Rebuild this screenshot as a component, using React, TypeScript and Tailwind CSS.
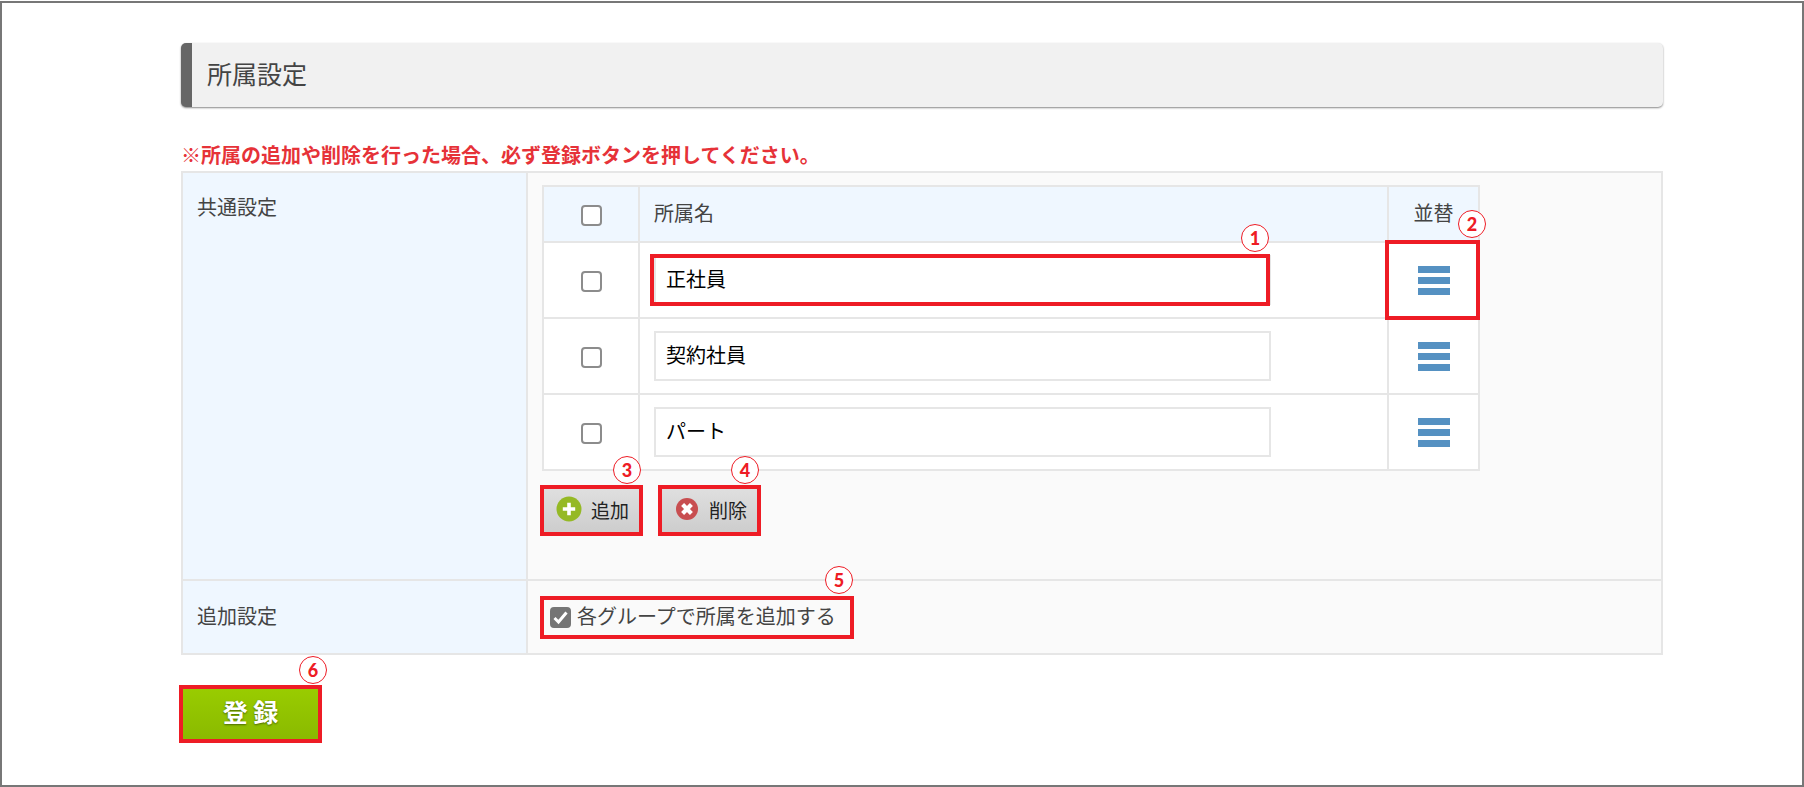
import type { ReactNode } from "react";

const frame = "border-4 border-[#ee1c25]";

function Marker({ n, className }: { n: number; className: string }) {
  return (
    <span
      className={`absolute z-10 flex size-7 items-center justify-center rounded-full border border-[#ee1c25] bg-white font-[Lato,sans-serif] text-lg leading-none font-black text-[#ee1c25] ${className}`}
    >
      {n}
    </span>
  );
}

function Check({ label, checked = false }: { label?: string; checked?: boolean }) {
  return (
    <span className="relative inline-flex size-[21px] shrink-0 align-middle">
      <input
        type="checkbox"
        aria-label={label}
        defaultChecked={checked}
        className="peer size-full appearance-none rounded-[4px] border-2 border-[#8c8c8c] bg-white checked:border-[#757575] checked:bg-[#757575]"
      />
      <svg
        viewBox="0 0 21 21"
        className="pointer-events-none absolute inset-0 hidden size-full peer-checked:block"
        aria-hidden="true"
      >
        <path d="M4.5 11 L8.5 15 L16.5 5.5" fill="none" stroke="#fff" strokeWidth="3" />
      </svg>
    </span>
  );
}

function Bars() {
  return (
    <svg viewBox="0 0 32 29" className="h-[29px] w-8" aria-hidden="true">
      <path d="M0 0h32v7H0zM0 11h32v7H0zM0 22h32v7H0z" fill="#5591c2" />
    </svg>
  );
}

function AddIcon() {
  return (
    <svg viewBox="0 0 26 26" className="size-[26px]" aria-hidden="true">
      <circle cx="13" cy="13" r="12.5" fill="#95b925" />
      <path d="M13 6.8v12.4M6.8 13h12.4" stroke="#fff" strokeWidth="3.6" />
    </svg>
  );
}

function RemoveIcon() {
  return (
    <svg viewBox="0 0 26 26" className="size-[26px]" aria-hidden="true">
      <circle cx="13" cy="13" r="11" fill="#c84e50" />
      <path d="M8.6 8.6l8.8 8.8M17.4 8.6l-8.8 8.8" stroke="#fff" strokeWidth="4.2" />
    </svg>
  );
}

function ToolButton({ icon, children, n }: { icon: ReactNode; children: ReactNode; n: number }) {
  return (
    <div className="relative">
      <Marker n={n} className="-top-[29px] right-[2px]" />
      <button
        type="button"
        className={`flex h-[51px] w-[103px] items-center gap-[9px] bg-linear-to-b from-[#dfdfdf] to-[#cdcdcd] pb-[3px] pl-3 text-[19px] leading-none whitespace-nowrap text-[#222] ${frame}`}
      >
        {icon}
        {children}
      </button>
    </div>
  );
}

const names = ["正社員", "契約社員", "パート"];
const cell = "border-2 border-[#e6e6e6]";

export default function App() {
  return (
    <div className="flex min-h-screen bg-white pt-px font-['Noto_Sans_CJK_JP',sans-serif] text-xl leading-none text-[#444]">
      <main className="flex-1 border-2 border-[#777] pt-10 pr-[139px] pb-10 pl-[179px]">
        <h1 className="flex h-16 items-center rounded-[5px] border-l-[11px] border-[#666] bg-[#f1f1f1] pb-[3px] pl-[15px] text-[25px] shadow-[0_1px_2px_#888]">
          所属設定
        </h1>
        <p className="mt-9 mb-1 leading-6 font-bold text-[#e63238]">
          ※所属の追加や削除を行った場合、必ず登録ボタンを押してください。
        </p>

        <table className="w-full border-collapse">
          <tbody>
            <tr>
              <th scope="row" className={`w-[345px] bg-[#eff7ff] px-[14px] pt-6 text-left align-top font-normal ${cell}`}>
                共通設定
              </th>
              <td className={`bg-[#fafafa] pt-3 pr-[181px] pb-[43px] pl-[14px] ${cell}`}>
                <table className="w-full table-fixed border-collapse bg-white">
                  <thead>
                    <tr className="h-14 bg-[#eff7ff]">
                      <th className={`w-[96px] text-center ${cell}`}>
                        <Check label="すべて選択" />
                      </th>
                      <th className={`pb-[3px] pl-[14px] text-left font-normal ${cell}`}>所属名</th>
                      <th className={`w-[91px] pb-[3px] text-center font-normal ${cell}`}>並替</th>
                    </tr>
                  </thead>
                  <tbody>
                    {names.map((name, i) => (
                      <tr key={name} className="h-[76px]">
                        <td className={`text-center ${cell}`}>
                          <Check label={`${name}を選択`} />
                        </td>
                        <td className={`pr-[116px] pl-[14px] ${cell}`}>
                          <div className="relative">
                            <input
                              type="text"
                              aria-label="所属名"
                              defaultValue={name}
                              className="block h-[50px] w-full border-2 border-[#e6e6e6] bg-white px-[10px] pb-1 text-black"
                            />
                            {i === 0 && (
                              <>
                                <span className={`pointer-events-none absolute -inset-y-px right-px -left-1 ${frame}`} />
                                <Marker n={1} className="-top-[31px] right-[2px]" />
                              </>
                            )}
                          </div>
                        </td>
                        <td className={`relative text-center ${cell}`}>
                          <button type="button" aria-label={`${name}を並べ替え`} className="block w-full">
                            <span className="flex justify-center">
                              <Bars />
                            </span>
                          </button>
                          {i === 0 && (
                            <>
                              <span className={`pointer-events-none absolute -inset-y-[3px] -right-[2px] -left-[4px] ${frame}`} />
                              <Marker n={2} className="-top-[33px] -right-[8px]" />
                            </>
                          )}
                        </td>
                      </tr>
                    ))}
                  </tbody>
                </table>
                <div className="mt-[14px] -ml-[2px] flex gap-[15px]">
                  <ToolButton icon={<AddIcon />} n={3}>
                    追加
                  </ToolButton>
                  <ToolButton icon={<RemoveIcon />} n={4}>
                    削除
                  </ToolButton>
                </div>
              </td>
            </tr>
            <tr>
              <th scope="row" className={`bg-[#eff7ff] px-[14px] pb-[3px] text-left font-normal ${cell}`}>
                追加設定
              </th>
              <td className={`bg-[#fafafa] pt-[15px] pb-[14px] pl-3 ${cell}`}>
                <div className="relative w-[314px]">
                  <label className={`flex h-[43px] items-center gap-[6px] pl-[6px] whitespace-nowrap ${frame}`}>
                    <Check checked />
                    <span className="pb-[3px]">各グループで所属を追加する</span>
                  </label>
                  <Marker n={5} className="-top-[30px] right-[1px]" />
                </div>
              </td>
            </tr>
          </tbody>
        </table>

        <div className="relative mt-[30px] -ml-[2px] w-[143px]">
          <button
            type="button"
            className={`h-[58px] w-full bg-linear-to-b from-[#99cc00] to-[#8aba00] pr-4 pb-[5px] pl-4 text-[25px] leading-none font-bold whitespace-nowrap text-white text-shadow-[0_1px_2px_#4a6a00] ${frame}`}
          >
            登 録
          </button>
          <Marker n={6} className="-top-[29px] -right-[5px]" />
        </div>
      </main>
    </div>
  );
}
